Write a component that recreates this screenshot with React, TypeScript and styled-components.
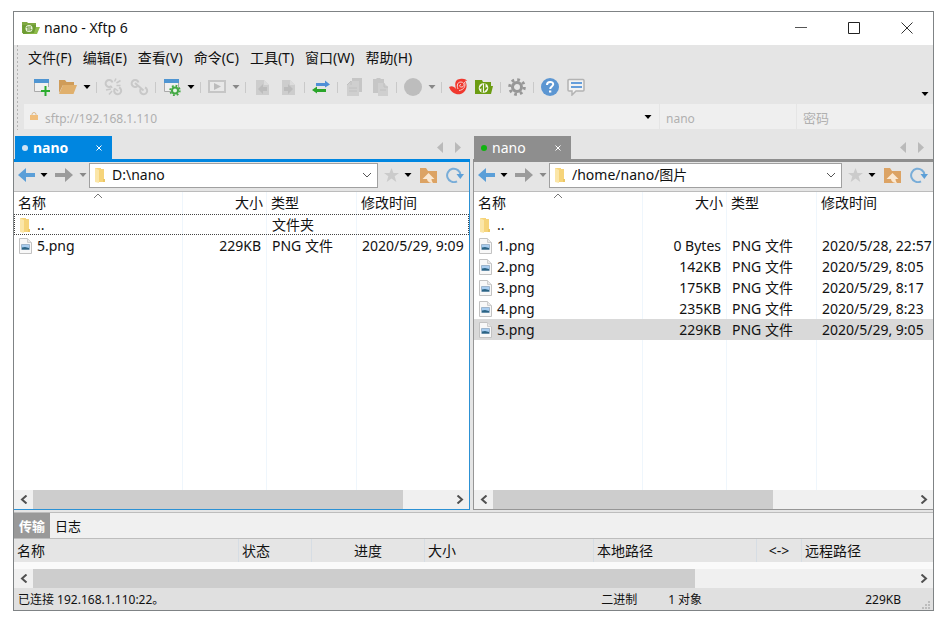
import React from "react";
import styled, { createGlobalStyle, css } from "styled-components";

const GlobalStyle = createGlobalStyle`
  * { box-sizing: border-box; }
  body {
    margin: 0;
    background: #fff;
    color: #111;
    font: 14px/20px "Noto Sans", "Noto Sans CJK SC", sans-serif;
  }
  button, input {
    font: inherit;
    color: inherit;
    border: 0;
    margin: 0;
    padding: 0;
    background: none;
  }
  svg { display: block; flex: none; }
`;

const Page = styled.div`
  min-height: 100vh;
  padding: 11px 11px 11px 13px;
  display: flex;
`;

const Window = styled.main`
  flex: 1;
  min-width: 0;
  display: flex;
  flex-direction: column;
  border: 1px solid #7f8385;
  background: #e5e5e5;
`;

const TitleBar = styled.header`
  display: flex;
  align-items: center;
  height: 33px;
  padding: 0 0 2px 8px;
  background: #fff;
`;

const Title = styled.h1`
  flex: 1;
  margin: 0 0 0 4px;
  font-size: 14px;
  font-weight: 400;
`;

const WindowButton = styled.button`
  width: 53px;
  height: 31px;
  display: flex;
  align-items: center;
  justify-content: center;
`;

const BarArea = styled.div`
  display: flex;
  height: 91px;
  padding: 0 0 6px 3px;
`;

const Grip = styled.div`
  width: 7px;
  background: linear-gradient(#b4b4b4 50%, transparent 50%) 0 0 / 1px 4px repeat-y;
`;

const Bars = styled.div`
  flex: 1;
  min-width: 0;
`;

const MenuBar = styled.nav`
  display: flex;
  align-items: center;
  gap: 11px;
  height: 27px;
  padding: 0 0 2px 4px;
`;

const MenuItem = styled.button`
  white-space: nowrap;
`;

const Toolbar = styled.div`
  display: flex;
  align-items: center;
  height: 32px;
  padding: 0 2px 2px 5px;
`;

const ToolButton = styled.button<{ $narrow?: boolean }>`
  width: ${(p) => (p.$narrow ? 12 : 26)}px;
  height: 26px;
  display: flex;
  align-items: center;
  justify-content: center;
`;

const Separator = styled.i`
  width: 1px;
  height: 11px;
  margin: 0 3px;
  background: #c9c9c9;
`;

const Overflow = styled(ToolButton)`
  margin-left: auto;
  align-self: flex-end;
  height: 16px;
`;

const AddressBar = styled.div`
  display: flex;
  gap: 1px;
  height: 25px;
  font-size: 12px;
`;

const AddressField = styled.label<{ $width?: number }>`
  display: flex;
  align-items: center;
  min-width: 0;
  padding-left: 6px;
  background: #efefef;
  flex: ${(p) => (p.$width ? `0 0 ${p.$width}px` : "1")};
`;

const AddressInput = styled.input<{ $cjk?: boolean }>`
  flex: 1;
  min-width: 0;
  width: 0;
  height: 25px;
  padding-top: 3px;
  color: #b0b0b0;
  font-size: ${(p) => (p.$cjk ? 13 : 12)}px;
  &::placeholder { color: #b0b0b0; opacity: 1; }
`;

const LockSlot = styled.span`
  width: 15px;
`;

const Panes = styled.div`
  flex: 1;
  display: grid;
  grid-template-columns: 456fr 460fr;
  gap: 3px;
`;

const PaneBox = styled.section<{ $active: boolean }>`
  min-width: 0;
  display: flex;
  flex-direction: column;
  --accent: ${(p) => (p.$active ? "#0086e0" : "#8e8e8e")};
`;

const TabBar = styled.div`
  display: flex;
  height: 26px;
  border-bottom: 3px solid var(--accent);
  padding: 0 9px 0 1px;
  align-items: stretch;
`;

const Tab = styled.div`
  display: flex;
  align-items: center;
  width: 97px;
  padding: 1px 8px 0 7px;
  background: var(--accent);
  color: #fff;
`;

const TabLabel = styled.button<{ $bold: boolean }>`
  flex: 1;
  display: flex;
  align-items: center;
  gap: 5px;
  font-weight: ${(p) => (p.$bold ? 700 : 400)};
`;

const Dot = styled.i<{ $color: string }>`
  width: 6px;
  height: 6px;
  border-radius: 50%;
  background: ${(p) => p.$color};
`;

const TabScroll = styled.div`
  display: flex;
  gap: 12px;
  margin-left: auto;
  align-items: center;
`;

const PaneFrame = styled.div<{ $active: boolean }>`
  flex: 1;
  display: flex;
  flex-direction: column;
  ${(p) =>
    p.$active
      ? css`border-right: 1px solid #2c91d4;`
      : css`border-left: 1px solid #969696;`}
  border-bottom: 1px solid ${(p) => (p.$active ? "#2c91d4" : "#969696")};
`;

const PathBar = styled.div`
  display: flex;
  align-items: center;
  height: 30px;
  padding: 0 2px 3px 3px;
  border-bottom: 1px solid #bcbcbc;
`;

const IconButton = styled.button<{ $width: number }>`
  width: ${(p) => p.$width}px;
  height: 24px;
  flex: none;
  display: flex;
  align-items: center;
  justify-content: center;
`;

const PathCombo = styled.label`
  flex: 1;
  min-width: 0;
  height: 25px;
  display: flex;
  align-items: center;
  padding-left: 4px;
  margin-right: 2px;
  border: 1px solid #a0a0a0;
  background: #fff;
`;

const PathInput = styled.input`
  flex: 1;
  width: 0;
  min-width: 0;
  margin-left: 7px;
`;

const ListArea = styled.div`
  flex: 1;
  min-height: 298px;
  overflow: hidden;
  background:
    linear-gradient(#eff6fc, #eff6fc) 168px 0 / 1px 100% no-repeat,
    linear-gradient(#eff6fc, #eff6fc) 252px 0 / 1px 100% no-repeat,
    linear-gradient(#eff6fc, #eff6fc) 342px 0 / 1px 100% no-repeat,
    #fff;
`;

const FileTable = styled.table`
  width: 100%;
  table-layout: fixed;
  border-collapse: collapse;
`;

const FileHead = styled.th<{ $right?: boolean; $first?: boolean }>`
  height: 22px;
  padding: 0 3px 0 ${(p) => (p.$first ? 4 : 5)}px;
  font-weight: 400;
  text-align: ${(p) => (p.$right ? "right" : "left")};
  white-space: nowrap;
`;

const HeadLabel = styled.span`
  display: flex;
  justify-content: space-between;
`;

const FileRow = styled.tr<{ $focused?: boolean; $selected?: boolean }>`
  height: 21px;
  background: ${(p) => (p.$selected ? "#d9d9d9" : "transparent")};
  ${(p) => p.$focused && css`outline: 1px dotted #444; outline-offset: -1px;`}
`;

const FileCell = styled.td<{ $right?: boolean }>`
  padding: 0 5px 0 6px;
  line-height: 21px;
  text-align: ${(p) => (p.$right ? "right" : "left")};
  white-space: nowrap;
`;

const FileName = styled.span`
  display: flex;
  align-items: center;
  margin-left: -1px;
`;

const FileIconSlot = styled.span`
  width: 18px;
`;

const ScrollTrack = styled.div`
  display: flex;
  height: 19px;
  background: #f0f0f0;
`;

const ScrollButton = styled.button`
  width: 19px;
  display: flex;
  align-items: center;
  justify-content: center;
`;

const Thumb = styled.div<{ $grow: number }>`
  flex: ${(p) => p.$grow} 0 0;
  background: #cdcdcd;
`;

const TrackRest = styled.div<{ $grow: number }>`
  flex: ${(p) => p.$grow} 0 0;
`;

const BottomTabs = styled.div`
  display: flex;
  height: 27px;
  margin-top: 2px;
  border-top: 1px solid #bdbdbd;
  border-bottom: 1px solid #bdbdbd;
  background: #f0f0f0;
`;

const BottomTab = styled.button<{ $active?: boolean }>`
  padding: 0 5px;
  background: ${(p) => (p.$active ? "#999" : "transparent")};
  color: ${(p) => (p.$active ? "#fff" : "#111")};
  font-weight: ${(p) => (p.$active ? 700 : 400)};
  font-size: 13px;
`;

const TransferTable = styled.table`
  width: 100%;
  table-layout: fixed;
  border-collapse: separate;
  border-spacing: 0;
  border-bottom: 7px solid #fafafa;
`;

const TransferHead = styled.th<{ $center?: boolean }>`
  height: 23px;
  padding: 0 3px;
  border-right: 1px solid #d6dde4;
  font-weight: 400;
  text-align: ${(p) => (p.$center ? "center" : "left")};
  white-space: nowrap;
  &:last-child { border-right: 0; }
`;

const Col = styled.col<{ $width?: number }>`
  width: ${(p) => (p.$width ? `${p.$width}px` : "auto")};
`;

const StatusBar = styled.footer`
  display: flex;
  align-items: center;
  height: 22px;
  padding: 1px 2px 0 4px;
  background: #e0e0e0;
  font-size: 12px;
  white-space: nowrap;
`;

const StatusMessage = styled.span`
  flex: 583 0 0;
`;

const StatusMode = styled.span`
  flex: 67 0 0;
`;

const StatusCount = styled.span`
  flex: 197 0 0;
`;

const GripSlot = styled.span`
  margin-left: 20px;
  align-self: flex-end;
`;

/* ---- icons ---- */

const Caret = ({ color = "#000" }: { color?: string }) => (
  <svg width="8" height="4" viewBox="0 0 8 4"><path d="M0.500 0h7L4 4z" fill={color} /></svg>
);

const AppIcon = () => (
  <svg width="18" height="14" viewBox="0 0 18 14">
    <path d="M0 1h5l1 1h8v10H0z" fill="#7fa842" />
    <path d="M0 4h14v9H1z" fill="#6d9c33" />
    <path d="M14 6h4l-3 7H2l10-1z" fill="#8fbc4b" />
    <circle cx="7" cy="7.500" r="3.500" fill="#e9f3dc" />
    <path d="M6 10V5.500L4.500 7M8 5v4.500L9.500 8" stroke="#5f8c2a" fill="none" />
  </svg>
);

const NewIcon = () => (
  <svg width="18" height="18" viewBox="0 0 18 18">
    <path d="M1.500 4v9.500H10M15.500 4v5" fill="none" stroke="#aaa" />
    <path d="M2 4h13v9H2z" fill="#f0f0f0" />
    <path d="M1 1h15v4H1z" fill="#4f95d2" />
    <path d="M12.500 8v10M8 13h9" stroke="#2bac2e" strokeWidth="2" />
  </svg>
);

const OpenIcon = () => (
  <svg width="18" height="18" viewBox="0 0 18 18">
    <path d="M0 2h6l1.500 2H15v3H4L0 15z" fill="#cf9c59" />
    <path d="M4 7h14l-3.500 9H0z" fill="#e0b06d" />
  </svg>
);

const LinkIcon = ({ broken }: { broken?: boolean }) => (
  <svg width="19" height="18" viewBox="0 0 19 18" fill="none" stroke="#c8c8c8" strokeWidth="2">
    <path d="M7.500 8A3.500 3.500 0 1 1 8.500 4.500" />
    <path d="M11 10.500A3.500 3.500 0 1 0 15 9.500" />
    {broken ? (
      <path d="M10.500 3.500l1.500-3M12.500 5l4-2.500M12.500 7.500h4M7 11l-5 1M8 13l-3 3.500M7 8l1 2M11 10.500l3 2.500" strokeWidth="1.500" />
    ) : (
      <path d="M5 5l8.500 7.500" />
    )}
  </svg>
);

const PropertiesIcon = () => (
  <svg width="18" height="18" viewBox="0 0 18 18">
    <path d="M1.500 4v9.500H15.500V4z" fill="#f0f0f0" stroke="#aaa" />
    <path d="M1 1h15v4H1z" fill="#4f95d2" />
    <circle cx="12" cy="12.500" r="3" fill="#e8f4e8" stroke="#43a944" strokeWidth="2" />
    <circle cx="12" cy="12.500" r="4.800" fill="none" stroke="#43a944" strokeWidth="1.800" strokeDasharray="1.800 1.970" />
  </svg>
);

const RunIcon = () => (
  <svg width="18" height="16" viewBox="0 0 18 16">
    <rect x="1" y="2" width="16" height="11" fill="#e8e8e8" stroke="#c6c6c6" strokeWidth="2" />
    <path d="M6 4l7 3.500L6 11z" fill="#bcbcbc" />
  </svg>
);

const MoveFileIcon = ({ right }: { right?: boolean }) => (
  <svg width="15" height="17" viewBox="0 0 15 17">
    <path d="M1 1h8l5 5v10H1z" fill="#cdcdcd" />
    <path d="M9 1v5h5" fill="#dcdcdc" />
    <path d={right ? "M3 8h4V5l5 5-5 5v-3H3z" : "M12 8H8V5l-5 5 5 5v-3h4z"} fill="#bcbcbc" />
  </svg>
);

const TransferIcon = () => (
  <svg width="18" height="14" viewBox="0 0 18 14">
    <path d="M4 3h9V0.500L18 4.500l-5 3V6H4z" fill="#4f8fd6" />
    <path d="M14 9H5V6.500L0 10l5 3.500V12h9z" fill="#2aa52a" />
  </svg>
);

const CopyIcon = () => (
  <svg width="17" height="18" viewBox="0 0 17 18">
    <path d="M6 0h10v14H6z" fill="#c6c6c6" />
    <path d="M5 3h8v15H1V7z" fill="#cfcfcf" />
    <path d="M1 7l4-4v4M3 10h8M3 13h8" stroke="#c0c0c0" fill="none" />
  </svg>
);

const PasteIcon = () => (
  <svg width="17" height="18" viewBox="0 0 17 18">
    <path d="M1 1h3l1-1h3l1 1h3v14H1z" fill="#c6c6c6" />
    <path d="M6 5h6l4 4v9H6z" fill="#cfcfcf" />
    <path d="M12 5v4h4M8 12h6" stroke="#c0c0c0" fill="none" />
  </svg>
);

const CircleIcon = () => (
  <svg width="18" height="18" viewBox="0 0 18 18"><circle cx="9" cy="9" r="9" fill="#bdbdbd" /></svg>
);

const SwirlIcon = () => (
  <svg width="18" height="18" viewBox="0 0 18 18">
    <path d="M0 9c3-1.500 5-0.500 7 2C5.500 6 6 1.500 11 1c4-1 7 1 7 2-1-.5-1.500-.5-2 0 2.500 3 2 8-1 11-4 4-12 3-15-5z" fill="#f0392f" />
    <path d="M9 11C7.500 7 8.500 4 12 4s4 4.500 1 5-3-2.500-1-2.500M15.500 4c1.500 4-.5 8-5.500 8.500" stroke="#f6d4d1" fill="none" />
  </svg>
);

const XftpIcon = () => (
  <svg width="18" height="16" viewBox="0 0 18 16">
    <path d="M0 1h7l1 2h8v4h2l-2 8H0z" fill="#6b9c12" />
    <circle cx="8.500" cy="9" r="4.800" fill="#f4f8ec" />
    <path d="M7.200 13.500V7L5 9.500M9.800 4.500V11L12 8.500" stroke="#6b9c12" strokeWidth="1.500" fill="none" />
  </svg>
);

const GearIcon = () => (
  <svg width="18" height="18" viewBox="0 0 18 18" fill="none">
    <circle cx="9" cy="9" r="4.500" stroke="#979797" strokeWidth="3" />
    <circle cx="9" cy="9" r="7.300" stroke="#979797" strokeWidth="3" strokeDasharray="2.700 3.030" />
  </svg>
);

const HelpIcon = () => (
  <svg width="18" height="18" viewBox="0 0 18 18">
    <circle cx="9" cy="9" r="9" fill="#5c96d2" />
    <path d="M6 7c0-4 6.500-4 6.200-.5C12 8.500 9.200 8.500 9.200 11" fill="none" stroke="#fff" strokeWidth="2" />
    <path d="M8 12.500h2.300v2H8z" fill="#fff" />
  </svg>
);

const ChatIcon = () => (
  <svg width="18" height="18" viewBox="0 0 18 18">
    <path d="M2 1.500h14a1.200 1.200 0 0 1 1 1V12a1 1 0 0 1-1 1H9l-4 4v-4H2a1 1 0 0 1-1-1V2.500a1 1 0 0 1 1-1z" fill="#f2f2f2" stroke="#b3b3b3" strokeWidth="1.500" />
    <path d="M4 5h11M4 9h11" stroke="#659edb" strokeWidth="2" />
  </svg>
);

const LockIcon = () => (
  <svg width="8" height="9" viewBox="0 0 8 9">
    <path d="M2 4V2.500a2 2 0 0 1 4 0V4" fill="none" stroke="#d9b98d" />
    <rect x="0" y="3" width="8" height="5" fill="#f0be7c" />
  </svg>
);

const ArrowIcon = ({ forward }: { forward?: boolean }) => (
  <svg width="18" height="14" viewBox="0 0 18 14">
    {forward ? <path d="M0 5h10V0l8 7-8 7V9H0z" fill="#9b9b9b" /> : <path d="M17 5H8V0L0 7l8 7V9h9z" fill="#5b9fd8" />}
  </svg>
);

const FolderIcon = () => (
  <svg width="11" height="16" viewBox="0 0 11 16">
    <path d="M1 1h6v1h3v13H1z" fill="#f6d47a" />
    <path d="M1 1l4 2v13l-4-1z" fill="#fbe6a8" />
    <path d="M9 12h2v3H9z" fill="#ecc766" />
  </svg>
);

const ImageFileIcon = () => (
  <svg width="13" height="16" viewBox="0 0 13 16">
    <path d="M0.500 0.500h8l4 4v11H0.500z" fill="#f8f8f8" stroke="#c2c2c2" />
    <path d="M8.500 0.500v4h4" fill="#e8e8e8" stroke="#cecece" />
    <path d="M2.500 6.500h8v5h-8z" fill="#a8cdf0" stroke="#9db4cb" />
    <path d="M3 9.500l3-.5 4 1v1.500H3z" fill="#2b6484" />
  </svg>
);

const Chevron = () => (
  <svg width="10" height="6" viewBox="0 0 10 6"><path d="M1 1l4 4 4-4" fill="none" stroke="#555" /></svg>
);

const StarIcon = () => (
  <svg width="15" height="14" viewBox="0 0 15 14"><path d="M7.500 0l2 5H15l-4.300 3.300L12.300 14 7.500 10.500 2.700 14l1.600-5.700L0 5h5.500z" fill="#cbcbcb" /></svg>
);

const UpFolderIcon = () => (
  <svg width="17" height="15" viewBox="0 0 17 15">
    <path d="M0 0h6l2 3h9v12H0z" fill="#dca364" />
    <path d="M8.500 5l6 6H11.500c0 1.500 .5 2.500 1.500 4-3 0-5.500-1-6-4H2.500z" fill="#fae8d2" />
  </svg>
);

const RefreshIcon = () => (
  <svg width="18" height="16" viewBox="0 0 18 16">
    <path d="M11 14.300A6.700 6.700 0 1 1 14.500 8" fill="none" stroke="#79add8" strokeWidth="2" />
    <path d="M10.500 7H18l-3.700 5z" fill="#5b9fd8" />
  </svg>
);

const Triangle = ({ right }: { right?: boolean }) => (
  <svg width="6" height="11" viewBox="0 0 6 11"><path d={right ? "M0 0l6 5.500L0 11z" : "M6 0L0 5.500 6 11z"} fill="#bababa" /></svg>
);

const ScrollChevron = ({ right }: { right?: boolean }) => (
  <svg width="8" height="9" viewBox="0 0 8 9"><path d={right ? "M1.500 0.500l4.500 4-4.500 4" : "M6.500 0.500L2 4.500l4.500 4"} fill="none" stroke="#505050" strokeWidth="2" /></svg>
);

/* ---- pieces ---- */

type Tool = "sep" | { label: string; icon: React.ReactNode; menu?: string };

const tools: Tool[] = [
  { label: "新建", icon: <NewIcon /> },
  { label: "打开", icon: <OpenIcon />, menu: "#000" },
  "sep",
  { label: "断开", icon: <LinkIcon broken /> },
  { label: "重新连接", icon: <LinkIcon /> },
  "sep",
  { label: "属性", icon: <PropertiesIcon />, menu: "#000" },
  "sep",
  { label: "运行", icon: <RunIcon />, menu: "#888" },
  "sep",
  { label: "向左传输", icon: <MoveFileIcon /> },
  { label: "向右传输", icon: <MoveFileIcon right /> },
  "sep",
  { label: "同步", icon: <TransferIcon /> },
  "sep",
  { label: "复制", icon: <CopyIcon /> },
  { label: "粘贴", icon: <PasteIcon /> },
  "sep",
  { label: "状态", icon: <CircleIcon />, menu: "#888" },
  "sep",
  { label: "Xshell", icon: <SwirlIcon /> },
  { label: "Xftp", icon: <XftpIcon /> },
  "sep",
  { label: "选项", icon: <GearIcon /> },
  "sep",
  { label: "帮助", icon: <HelpIcon /> },
  { label: "反馈", icon: <ChatIcon /> },
];

const menus = ["文件(F)", "编辑(E)", "查看(V)", "命令(C)", "工具(T)", "窗口(W)", "帮助(H)"];

const HScroll = ({ thumb, rest }: { thumb: number; rest: number }) => (
  <ScrollTrack>
    <ScrollButton aria-label="向左滚动"><ScrollChevron /></ScrollButton>
    <Thumb $grow={thumb} />
    <TrackRest $grow={rest} />
    <ScrollButton aria-label="向右滚动"><ScrollChevron right /></ScrollButton>
  </ScrollTrack>
);

interface FileEntry {
  name: string;
  size: string;
  type: string;
  date: string;
  folder?: boolean;
  focused?: boolean;
  selected?: boolean;
}

interface PaneProps {
  active: boolean;
  dot: string;
  path: string;
  files: FileEntry[];
  thumb: number;
  rest: number;
}

const Pane = ({ active, dot, path, files, thumb, rest }: PaneProps) => (
  <PaneBox $active={active}>
    <TabBar>
      <Tab>
        <TabLabel $bold={active}><Dot $color={dot} />nano</TabLabel>
        <IconButton $width={10} aria-label="关闭标签">
          <svg width="6" height="6" viewBox="0 0 6 6"><path d="M0.500 0.500l5 5M5.500 0.500l-5 5" stroke="#fff" /></svg>
        </IconButton>
      </Tab>
      <TabScroll><Triangle /><Triangle right /></TabScroll>
    </TabBar>
    <PaneFrame $active={active}>
      <PathBar>
        <IconButton $width={20} aria-label="后退"><ArrowIcon /></IconButton>
        <IconButton $width={14} aria-label="后退记录"><Caret /></IconButton>
        <IconButton $width={26} aria-label="前进"><ArrowIcon forward /></IconButton>
        <IconButton $width={12} aria-label="前进记录"><Caret color="#888" /></IconButton>
        <PathCombo>
          <FolderIcon />
          <PathInput aria-label="路径" defaultValue={path} />
          <IconButton $width={20} aria-label="路径列表"><Chevron /></IconButton>
        </PathCombo>
        <IconButton $width={22} aria-label="收藏"><StarIcon /></IconButton>
        <IconButton $width={12} aria-label="收藏列表"><Caret /></IconButton>
        <IconButton $width={29} aria-label="上一级"><UpFolderIcon /></IconButton>
        <IconButton $width={24} aria-label="刷新"><RefreshIcon /></IconButton>
      </PathBar>
      <ListArea>
        <FileTable>
          <colgroup><Col $width={168} /><Col $width={84} /><Col $width={90} /><Col /></colgroup>
          <thead>
            <tr>
              <FileHead $first>
                <HeadLabel>
                  名称
                  <svg width="85" height="6" viewBox="0 0 85 6"><path d="M0 5l4-4 4 4" fill="none" stroke="#777" /></svg>
                </HeadLabel>
              </FileHead>
              <FileHead $right>大小</FileHead>
              <FileHead>类型</FileHead>
              <FileHead>修改时间</FileHead>
            </tr>
          </thead>
          <tbody>
            {files.map((f) => (
              <FileRow key={f.name} $focused={f.focused} $selected={f.selected}>
                <FileCell>
                  <FileName>
                    <FileIconSlot>{f.folder ? <FolderIcon /> : <ImageFileIcon />}</FileIconSlot>
                    {f.name}
                  </FileName>
                </FileCell>
                <FileCell $right>{f.size}</FileCell>
                <FileCell>{f.type}</FileCell>
                <FileCell>{f.date}</FileCell>
              </FileRow>
            ))}
          </tbody>
        </FileTable>
      </ListArea>
      <HScroll thumb={thumb} rest={rest} />
    </PaneFrame>
  </PaneBox>
);

const png = (name: string, size: string, date: string, selected?: boolean): FileEntry => ({
  name, size, date, selected, type: "PNG 文件",
});

const localFiles: FileEntry[] = [
  { name: "..", size: "", type: "文件夹", date: "", folder: true, focused: true },
  png("5.png", "229KB", "2020/5/29, 9:09"),
];

const remoteFiles: FileEntry[] = [
  { name: "..", size: "", type: "", date: "", folder: true },
  png("1.png", "0 Bytes", "2020/5/28, 22:57"),
  png("2.png", "142KB", "2020/5/29, 8:05"),
  png("3.png", "175KB", "2020/5/29, 8:17"),
  png("4.png", "235KB", "2020/5/29, 8:23"),
  png("5.png", "229KB", "2020/5/29, 9:05", true),
];

export default function App() {
  return (
    <>
      <GlobalStyle />
      <Page>
        <Window>
          <TitleBar>
            <AppIcon />
            <Title>nano - Xftp 6</Title>
            <WindowButton aria-label="最小化">
              <svg width="12" height="12" viewBox="0 0 12 12"><path d="M0 5.500h12" stroke="#555" /></svg>
            </WindowButton>
            <WindowButton aria-label="最大化">
              <svg width="12" height="12" viewBox="0 0 12 12"><path d="M0.500 0.500h11v11h-11z" fill="none" stroke="#222" /></svg>
            </WindowButton>
            <WindowButton aria-label="关闭">
              <svg width="12" height="12" viewBox="0 0 12 12"><path d="M0.500 0.500l11 11M11.500 0.500l-11 11" stroke="#333" /></svg>
            </WindowButton>
          </TitleBar>

          <BarArea>
            <Grip />
            <Bars>
              <MenuBar>{menus.map((m) => <MenuItem key={m}>{m}</MenuItem>)}</MenuBar>
              <Toolbar>
                {tools.map((t, i) =>
                  t === "sep" ? (
                    <Separator key={i} />
                  ) : (
                    <React.Fragment key={i}>
                      <ToolButton aria-label={t.label}>{t.icon}</ToolButton>
                      {t.menu && <ToolButton $narrow aria-label={`${t.label}菜单`}><Caret color={t.menu} /></ToolButton>}
                    </React.Fragment>
                  )
                )}
                <Overflow $narrow aria-label="更多"><Caret /></Overflow>
              </Toolbar>
              <AddressBar>
                <AddressField>
                  <LockSlot><LockIcon /></LockSlot>
                  <AddressInput aria-label="地址" defaultValue="sftp://192.168.1.110" />
                  <IconButton $width={22} aria-label="地址列表"><Caret /></IconButton>
                </AddressField>
                <AddressField $width={136}>
                  <AddressInput aria-label="用户名" defaultValue="nano" />
                </AddressField>
                <AddressField $width={136}>
                  <AddressInput $cjk type="password" aria-label="密码" placeholder="密码" />
                </AddressField>
              </AddressBar>
            </Bars>
          </BarArea>

          <Panes>
            <Pane active dot="#cfe3f3" path="D:\nano" files={localFiles} thumb={370} rest={47} />
            <Pane active={false} dot="#0fb40f" path="/home/nano/图片" files={remoteFiles} thumb={280} rest={141} />
          </Panes>

          <BottomTabs>
            <BottomTab $active>传输</BottomTab>
            <BottomTab>日志</BottomTab>
          </BottomTabs>
          <TransferTable>
            <colgroup>
              <Col $width={225} /><Col $width={73} /><Col $width={113} /><Col $width={169} />
              <Col $width={163} /><Col $width={45} /><Col />
            </colgroup>
            <thead>
              <tr>
                <TransferHead>名称</TransferHead>
                <TransferHead>状态</TransferHead>
                <TransferHead $center>进度</TransferHead>
                <TransferHead>大小</TransferHead>
                <TransferHead>本地路径</TransferHead>
                <TransferHead $center>&lt;-&gt;</TransferHead>
                <TransferHead>远程路径</TransferHead>
              </tr>
            </thead>
          </TransferTable>
          <HScroll thumb={663} rest={219} />
          <StatusBar>
            <StatusMessage>已连接 192.168.1.110:22。</StatusMessage>
            <StatusMode>二进制</StatusMode>
            <StatusCount>1 对象</StatusCount>
            <span>229KB</span>
            <GripSlot>
              <svg width="10" height="10" viewBox="0 0 10 10">
                <path d="M7 1h2v2H7zM7 4h2v2H7zM7 7h2v2H7zM4 4h2v2H4zM4 7h2v2H4zM1 7h2v2H1z" fill="#bcbcbc" />
              </svg>
            </GripSlot>
          </StatusBar>
        </Window>
      </Page>
    </>
  );
}
